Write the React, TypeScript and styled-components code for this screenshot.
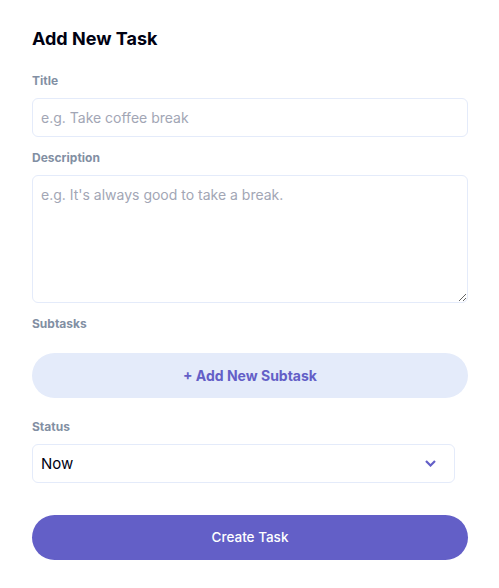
import React from "react";
import styled, { createGlobalStyle } from "styled-components";

const GlobalStyle = createGlobalStyle`
  html, body { margin: 0; padding: 0; background: #ffffff; }
  body { font-family: Inter, "Noto Sans", sans-serif; -webkit-font-smoothing: antialiased; }
  * { box-sizing: border-box; }
`;

const Panel = styled.form`
  width: 499px;
  padding: 27px 31px 28px 32px;
  background: #ffffff;
  display: flex;
  flex-direction: column;
`;

const Heading = styled.h2`
  margin: 0 0 23px;
  font-size: 18px;
  line-height: 23px;
  font-weight: 700;
  color: #000112;
`;

const Field = styled.div<{ $gapAfter: number }>`
  display: flex;
  flex-direction: column;
  margin-bottom: ${(p) => p.$gapAfter}px;
`;

const Label = styled.label<{ $space?: number }>`
  font-size: 12px;
  line-height: 15px;
  font-weight: 700;
  color: #828fa3;
  margin-bottom: ${(p) => p.$space ?? 10}px;
`;

const TextInput = styled.input`
  width: 436px;
  height: 39px;
  border: 1px solid #e4ebfa;
  border-radius: 6px;
  padding: 0 8px;
  font-family: inherit;
  font-size: 14px;
  color: #000112;
  background: #ffffff;
  outline: none;
  &::placeholder { color: #a2a6b5; }
`;

const TextArea = styled.textarea`
  width: 436px;
  height: 128px;
  border: 1px solid #e4ebfa;
  border-radius: 6px;
  padding: 7px 8px;
  font-family: inherit;
  font-size: 14px;
  line-height: 23px;
  color: #000112;
  background: #ffffff;
  outline: none;
  resize: both;
  &::placeholder { color: #a2a6b5; }
`;

const Pill = styled.button<{ $variant: "soft" | "solid" }>`
  width: 436px;
  height: 45px;
  border: none;
  border-radius: 22.5px;
  font-family: inherit;
  font-size: ${(p) => (p.$variant === "soft" ? 14 : 13.5)}px;
  line-height: 23px;
  font-weight: ${(p) => (p.$variant === "soft" ? 700 : 500)};
  color: ${(p) => (p.$variant === "soft" ? "#635fc7" : "#ffffff")};
  background: ${(p) => (p.$variant === "soft" ? "#e4ebfa" : "#635fc7")};
  cursor: pointer;
`;

const SelectWrap = styled.div`
  position: relative;
  width: 423px;
`;

const Select = styled.select`
  appearance: none;
  width: 423px;
  height: 39px;
  border: 1px solid #e4ebfa;
  border-radius: 6px;
  padding: 0 8px;
  font-family: inherit;
  font-size: 15px;
  color: #000112;
  background: #ffffff;
  outline: none;
`;

const Chevron = styled.svg`
  position: absolute;
  right: 19px;
  top: 16px;
  pointer-events: none;
`;

export default function App() {
  return (
    <>
      <GlobalStyle />
      <Panel onSubmit={(e) => e.preventDefault()}>
        <Heading>Add New Task</Heading>
        <Field $gapAfter={13}>
          <Label>Title</Label>
          <TextInput placeholder="e.g. Take coffee break" />
        </Field>
        <Field $gapAfter={13}>
          <Label>Description</Label>
          <TextArea placeholder="e.g. It's always good to take a break." />
        </Field>
        <Field $gapAfter={21}>
          <Label $space={22}>Subtasks</Label>
          <Pill type="button" $variant="soft">+ Add New Subtask</Pill>
        </Field>
        <Field $gapAfter={32}>
          <Label>Status</Label>
          <SelectWrap>
            <Select defaultValue="Now">
              <option>Now</option>
              <option>Next</option>
              <option>Later</option>
            </Select>
            <Chevron width="11" height="7" viewBox="0 0 11 7">
              <path d="M1 1l4.5 4.5L10 1" stroke="#635FC7" strokeWidth="2.2" fill="none" />
            </Chevron>
          </SelectWrap>
        </Field>
        <Pill type="submit" $variant="solid">Create Task</Pill>
      </Panel>
    </>
  );
}
